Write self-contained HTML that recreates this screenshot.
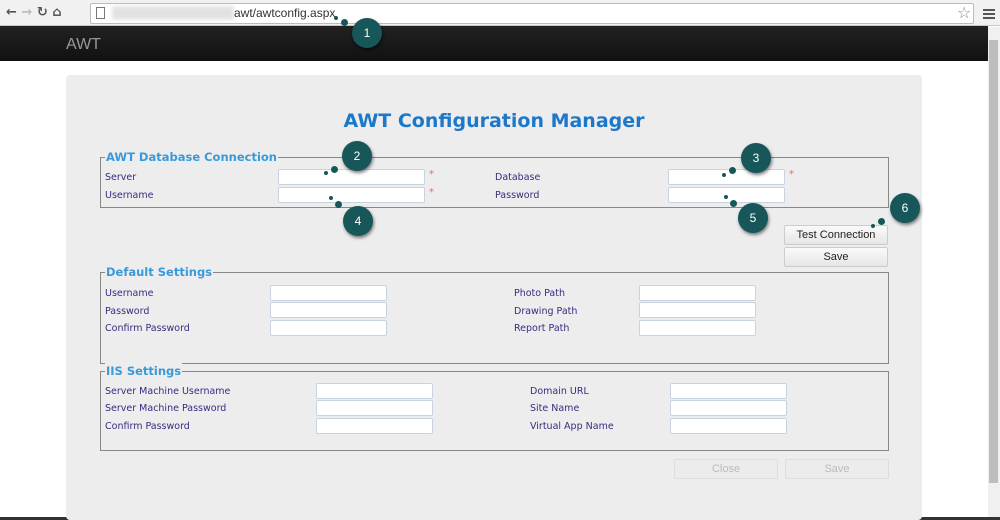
<!DOCTYPE html>
<html><head><meta charset="utf-8"><style>
*{margin:0;padding:0;box-sizing:border-box}
body{width:1000px;height:520px;overflow:hidden;background:#fff;position:relative;font-family:"DejaVu Sans","Liberation Sans",sans-serif}
.a{position:absolute}
.lbl{position:absolute;font-size:9.5px;color:#3b2a80;line-height:12px}
.inp{position:absolute;width:117px;height:16px;background:#fff;border:1px solid #c9d3df;border-radius:2px}
.fs{position:absolute;border:1px solid #888;left:100px;width:789px}
.lg{position:absolute;top:-9px;left:4px;background:#ededed;padding:0 1px;font-size:11.5px;font-weight:bold;color:#3a9ad9;line-height:16px}
.st{position:absolute;color:#e66;font-size:10px}
.btn{position:absolute;height:20px;border:1px solid #ccc;border-radius:2px;background:linear-gradient(#fafafa,#e6e6e6);font-family:"Liberation Sans",sans-serif;font-size:11px;color:#222;text-align:center;line-height:18px}
.dis{color:#bbb;background:#ececec;border-color:#ddd}
.c{position:absolute;width:30px;height:30px;border-radius:50%;background:#175659;color:#fff;font-family:"Liberation Sans",sans-serif;font-size:12px;text-align:center;line-height:30px;box-shadow:1px 2px 3px rgba(0,0,0,.5)}
.d{position:absolute;border-radius:50%;background:#175659}
</style></head><body>
<div class="a" style="left:0;top:0;width:1000px;height:26px;background:#f1f1f1;border-bottom:1px solid #c8c8c8"></div>
<div class="a" style="left:6px;top:5px;font-size:13px;color:#555;font-weight:bold;font-family:'DejaVu Sans'">← <span style="color:#bbb">→</span> ↻ ⌂</div>
<div class="a" style="left:90px;top:3px;width:884px;height:21px;background:#fff;border:1px solid #bbb;border-radius:2px"></div>
<div class="a" style="left:96px;top:7px;width:9px;height:12px;border:1px solid #777"></div>
<div class="a" style="left:112px;top:6px;width:122px;height:14px;background:#e2e2e2;filter:blur(2px)"></div>
<div class="a" style="left:234px;top:6px;font-family:'Liberation Sans';font-size:12px;color:#333">awt/awtconfig.aspx</div>
<div class="a" style="left:957px;top:3px;font-size:16px;color:#888">☆</div>
<div class="a" style="left:983px;top:9px;width:12px;height:2px;background:#555;box-shadow:0 4px 0 #555,0 8px 0 #555"></div>
<div class="a" style="left:0;top:26px;width:988px;height:35px;background:linear-gradient(#222,#111)"></div>
<div class="a" style="left:66px;top:36px;font-family:'Liberation Sans';font-size:16px;color:#999">AWT</div>
<div class="a" style="left:988px;top:27px;width:12px;height:493px;background:#f0f0f0"></div>
<div class="a" style="left:989px;top:40px;width:9px;height:443px;background:#bdbdbd"></div>
<div class="a" style="left:0;top:517px;width:1000px;height:3px;background:#333"></div>
<div class="a" style="left:66px;top:75px;width:856px;height:445px;background:#ededed;border-radius:4px"></div>
<div class="a" style="left:66px;top:110px;width:856px;text-align:center;font-size:19px;font-weight:bold;color:#1d78c9;font-family:'DejaVu Sans'">AWT Configuration Manager</div>

<div class="fs" style="top:157px;height:51px"><div class="lg">AWT Database Connection</div></div>
<div class="lbl" style="left:105px;top:172px">Server</div>
<div class="lbl" style="left:105px;top:190px">Username</div>
<div class="inp" style="left:278px;top:169px;width:147px"></div>
<div class="inp" style="left:278px;top:187px;width:147px"></div>
<div class="st" style="left:429px;top:169px">*</div><div class="st" style="left:429px;top:187px">*</div>
<div class="lbl" style="left:495px;top:172px">Database</div>
<div class="lbl" style="left:495px;top:190px">Password</div>
<div class="inp" style="left:668px;top:169px"></div>
<div class="inp" style="left:668px;top:187px"></div>
<div class="st" style="left:789px;top:169px">*</div>

<div class="btn" style="left:784px;top:225px;width:104px">Test Connection</div>
<div class="btn" style="left:784px;top:247px;width:104px">Save</div>

<div class="fs" style="top:272px;height:92px"><div class="lg">Default Settings</div></div>
<div class="lbl" style="left:105px;top:288px">Username</div>
<div class="lbl" style="left:105px;top:306px">Password</div>
<div class="lbl" style="left:105px;top:323px">Confirm Password</div>
<div class="inp" style="left:270px;top:285px"></div>
<div class="inp" style="left:270px;top:302px"></div>
<div class="inp" style="left:270px;top:320px"></div>
<div class="lbl" style="left:514px;top:288px">Photo Path</div>
<div class="lbl" style="left:514px;top:306px">Drawing Path</div>
<div class="lbl" style="left:514px;top:323px">Report Path</div>
<div class="inp" style="left:639px;top:285px"></div>
<div class="inp" style="left:639px;top:302px"></div>
<div class="inp" style="left:639px;top:320px"></div>

<div class="fs" style="top:371px;height:80px"><div class="lg">IIS Settings</div></div>
<div class="lbl" style="left:105px;top:386px">Server Machine Username</div>
<div class="lbl" style="left:105px;top:403px">Server Machine Password</div>
<div class="lbl" style="left:105px;top:421px">Confirm Password</div>
<div class="inp" style="left:316px;top:383px"></div>
<div class="inp" style="left:316px;top:400px"></div>
<div class="inp" style="left:316px;top:418px"></div>
<div class="lbl" style="left:530px;top:386px">Domain URL</div>
<div class="lbl" style="left:530px;top:403px">Site Name</div>
<div class="lbl" style="left:530px;top:421px">Virtual App Name</div>
<div class="inp" style="left:670px;top:383px"></div>
<div class="inp" style="left:670px;top:400px"></div>
<div class="inp" style="left:670px;top:418px"></div>

<div class="btn dis" style="left:674px;top:459px;width:104px">Close</div>
<div class="btn dis" style="left:785px;top:459px;width:104px">Save</div>

<div class="d" style="left:334px;top:16px;width:4px;height:4px"></div><div class="d" style="left:341px;top:19px;width:7px;height:7px"></div>
<div class="c" style="left:352px;top:18px">1</div>
<div class="d" style="left:324px;top:171px;width:4px;height:4px"></div><div class="d" style="left:331px;top:166px;width:7px;height:7px"></div>
<div class="c" style="left:342px;top:141px">2</div>
<div class="d" style="left:722px;top:173px;width:4px;height:4px"></div><div class="d" style="left:729px;top:167px;width:7px;height:7px"></div>
<div class="c" style="left:741px;top:143px">3</div>
<div class="d" style="left:329px;top:196px;width:4px;height:4px"></div><div class="d" style="left:335px;top:201px;width:7px;height:7px"></div>
<div class="c" style="left:343px;top:206px">4</div>
<div class="d" style="left:724px;top:195px;width:4px;height:4px"></div><div class="d" style="left:730px;top:200px;width:7px;height:7px"></div>
<div class="c" style="left:738px;top:203px">5</div>
<div class="d" style="left:871px;top:224px;width:4px;height:4px"></div><div class="d" style="left:878px;top:218px;width:7px;height:7px"></div>
<div class="c" style="left:890px;top:193px">6</div>
</body></html>
